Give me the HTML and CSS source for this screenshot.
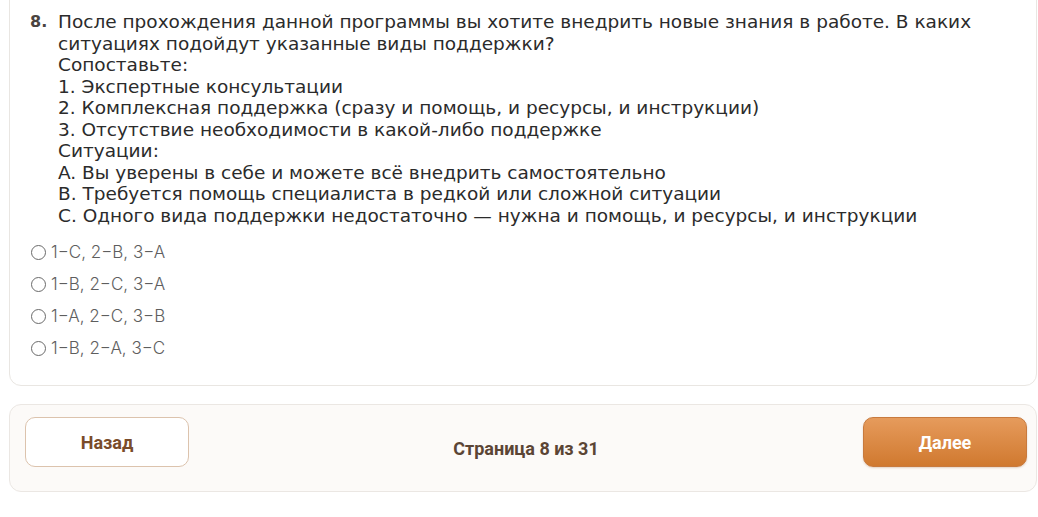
FILE: index.html
```html
<!DOCTYPE html>
<html lang="ru">
<head>
<meta charset="utf-8">
<title>Тест — вопрос 8</title>
<link rel="stylesheet" href="styles.css">
</head>
<body>
<main class="page">
  <section class="card">
    <div class="question">
      <span class="qnum">8.</span>
      <div class="qtext">После прохождения данной программы вы хотите внедрить новые знания в работе. В каких ситуациях подойдут указанные виды поддержки?<br>Сопоставьте:<br>1. Экспертные консультации<br>2. Комплексная поддержка (сразу и помощь, и ресурсы, и инструкции)<br>3. Отсутствие необходимости в какой-либо поддержке<br>Ситуации:<br>A. Вы уверены в себе и можете всё внедрить самостоятельно<br>B. Требуется помощь специалиста в редкой или сложной ситуации<br>C. Одного вида поддержки недостаточно — нужна и помощь, и ресурсы, и инструкции</div>
    </div>
    <ul class="options">
      <li class="option"><span class="radio"></span>1−C, 2−B, 3−A</li>
      <li class="option"><span class="radio"></span>1−B, 2−C, 3−A</li>
      <li class="option"><span class="radio"></span>1−A, 2−C, 3−B</li>
      <li class="option"><span class="radio"></span>1−B, 2−A, 3−C</li>
    </ul>
  </section>
  <nav class="pager">
    <button class="btn btn-back">Назад</button>
    <span class="page-info">Страница 8 из 31</span>
    <button class="btn btn-next">Далее</button>
  </nav>
</main>
</body>
</html>
```
FILE: styles.css
```css
* { box-sizing: border-box; }

html, body {
  margin: 0;
  background: #ffffff;
}

.page {
  padding: 0 1px 0 9px;
  display: flex;
  flex-direction: column;
  gap: 18px;
}

.card {
  margin-top: -20px;
  border: 1px solid #e9e6e2;
  border-radius: 12px;
  padding: 30px 20px 27px 20px;
  background: #ffffff;
}

.question {
  display: flex;
  font-family: "DejaVu Sans", sans-serif;
  font-size: 18.5px;
  line-height: 21.5px;
  color: #2b2b2b;
}

.qnum {
  width: 28px;
  flex: none;
  font-weight: bold;
  font-size: 16px;
  color: #4a4440;
}

.qtext {
  flex: 1;
}

.options {
  list-style: none;
  margin: 16px 0 0 0;
  padding: 0;
  display: flex;
  flex-direction: column;
  gap: 12px;
}

.option {
  display: flex;
  align-items: center;
  gap: 5px;
  height: 20px;
  font-family: Inter, sans-serif;
  font-weight: 300;
  font-size: 17px;
  color: #5e5e5e;
}

.radio {
  width: 15px;
  height: 15px;
  border: 1.3px solid #6a6a6a;
  border-radius: 50%;
  margin-left: 1px;
}

.pager {
  display: flex;
  align-items: center;
  justify-content: space-between;
  padding: 12px 9px 24px 15px;
  border: 1px solid #ebe7e3;
  border-radius: 12px;
  background: #fcfaf8;
}

.btn {
  width: 164px;
  height: 50px;
  border-radius: 10px;
  font-family: Roboto, sans-serif;
  font-weight: bold;
  font-size: 18px;
  cursor: pointer;
}

.btn-back {
  background: #ffffff;
  border: 1px solid #dcc3ad;
  color: #7a4c2a;
}

.btn-next {
  background: linear-gradient(#e69b5c, #d0792f);
  border: 1px solid #c87a3e;
  color: #ffffff;
  box-shadow: 0 1px 2px rgba(150, 90, 40, 0.25);
}

.page-info {
  font-family: Roboto, sans-serif;
  font-weight: bold;
  font-size: 18px;
  color: #5b4535;
  margin-top: 12px;
}
```
